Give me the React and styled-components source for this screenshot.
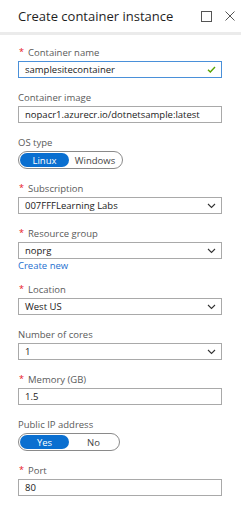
import React from 'react';
import styled, { createGlobalStyle } from 'styled-components';

const GlobalStyle = createGlobalStyle`
    html, body {
        margin: 0;
        padding: 0;
        background: #ffffff;
    }
    body {
        font-family: 'Open Sans', 'Noto Sans', sans-serif;
        color: #222;
    }
`;

const Blade = styled.div`
    width: 241px;
    min-height: 512px;
    background: #fff;
`;

const Header = styled.div`
    display: flex;
    align-items: center;
    justify-content: space-between;
    height: 32px;
    padding: 0 6px 0 18px;
    border-bottom: 3px solid #ebebeb;
`;

const Title = styled.h1`
    margin: 0;
    font-size: 13px;
    font-weight: 400;
    color: #1f1f1f;
`;

const HeaderActions = styled.div`
    display: flex;
    align-items: center;
    gap: 13px;
`;

const Form = styled.div`
    padding: 10px 19px 0 18px;
`;

const Field = styled.div`
    margin-bottom: 12px;
`;

const Label = styled.div`
    display: flex;
    align-items: center;
    height: 14px;
    margin-bottom: 2px;
    font-size: 9.5px;
    color: #5a5a5a;
`;

const Star = styled.span`
    width: 9px;
    margin-left: 1px;
    font-size: 9px;
    line-height: 1;
    color: #e81123;
    transform: translateY(-1px);
`;

const Box = styled.div`
    display: flex;
    align-items: center;
    justify-content: space-between;
    box-sizing: border-box;
    height: 17px;
    padding: 0 5px 0 6px;
    border: 1px solid ${p => (p.$focused ? '#4a90d9' : '#a9a9a9')};
    font-size: 9.5px;
    color: #1a1a1a;
`;

const Toggle = styled.div`
    display: flex;
    align-items: center;
    box-sizing: border-box;
    width: ${p => p.$width}px;
    height: 18px;
    padding: 1px;
    border: 1px solid #8a8a8a;
    border-radius: 9px;
`;

const ToggleOption = styled.div`
    display: flex;
    align-items: center;
    justify-content: center;
    flex: ${p => (p.$active ? '0 0 49px' : '1')};
    height: 14px;
    border-radius: 7px;
    font-size: 9.5px;
    background: ${p => (p.$active ? '#0a6fd0' : 'transparent')};
    color: ${p => (p.$active ? '#fff' : '#444')};
`;

const Link = styled.div`
    height: 11px;
    line-height: 13px;
    font-size: 9.5px;
    color: #1e6fd0;
`;

const Chevron = () => (
    <svg width="9" height="6" viewBox="0 0 9 6">
        <path d="M1 1 L4.5 4.5 L8 1" fill="none" stroke="#333" strokeWidth="1.1" />
    </svg>
);

const Check = () => (
    <svg width="9" height="7" viewBox="0 0 9 7">
        <path d="M1 3.8 L3.3 6 L8 1" fill="none" stroke="#57a300" strokeWidth="1.4" />
    </svg>
);

const FieldLabel = ({ required, children }) => (
    <Label>
        {required && <Star>*</Star>}
        {children}
    </Label>
);

const TextField = ({ label, required, value, focused, valid }) => (
    <Field>
        <FieldLabel required={required}>{label}</FieldLabel>
        <Box $focused={focused}>
            <span>{value}</span>
            {valid && <Check />}
        </Box>
    </Field>
);

const SelectField = ({ label, required, value, children }) => (
    <Field>
        <FieldLabel required={required}>{label}</FieldLabel>
        <Box>
            <span>{value}</span>
            <Chevron />
        </Box>
        {children}
    </Field>
);

const ToggleField = ({ label, options, active, width }) => (
    <Field>
        <FieldLabel>{label}</FieldLabel>
        <Toggle $width={width}>
            {options.map(o => (
                <ToggleOption key={o} $active={o === active}>{o}</ToggleOption>
            ))}
        </Toggle>
    </Field>
);

const App = () => {
    return (
        <Blade>
            <GlobalStyle />
            <Header>
                <Title>Create container instance</Title>
                <HeaderActions>
                    <svg width="11" height="11" viewBox="0 0 11 11">
                        <rect x="0.5" y="0.5" width="10" height="10" fill="none" stroke="#555" />
                    </svg>
                    <svg width="10" height="10" viewBox="0 0 10 10">
                        <path d="M0.5 0.5 L9.5 9.5 M9.5 0.5 L0.5 9.5" stroke="#555" strokeWidth="1" />
                    </svg>
                </HeaderActions>
            </Header>

            <Form>
                <TextField label="Container name" required value="samplesitecontainer" focused valid />
                <TextField label="Container image" value="nopacr1.azurecr.io/dotnetsample:latest" />
                <ToggleField label="OS type" options={['Linux', 'Windows']} active="Linux" width={105} />
                <SelectField label="Subscription" required value="007FFFLearning Labs" />
                <SelectField label="Resource group" required value="noprg">
                    <Link>Create new</Link>
                </SelectField>
                <SelectField label="Location" required value="West US" />
                <SelectField label="Number of cores" value="1" />
                <TextField label="Memory (GB)" required value="1.5" />
                <ToggleField label="Public IP address" options={['Yes', 'No']} active="Yes" width={102} />
                <TextField label="Port" required value="80" />
            </Form>
        </Blade>
    );
};

export default App;
